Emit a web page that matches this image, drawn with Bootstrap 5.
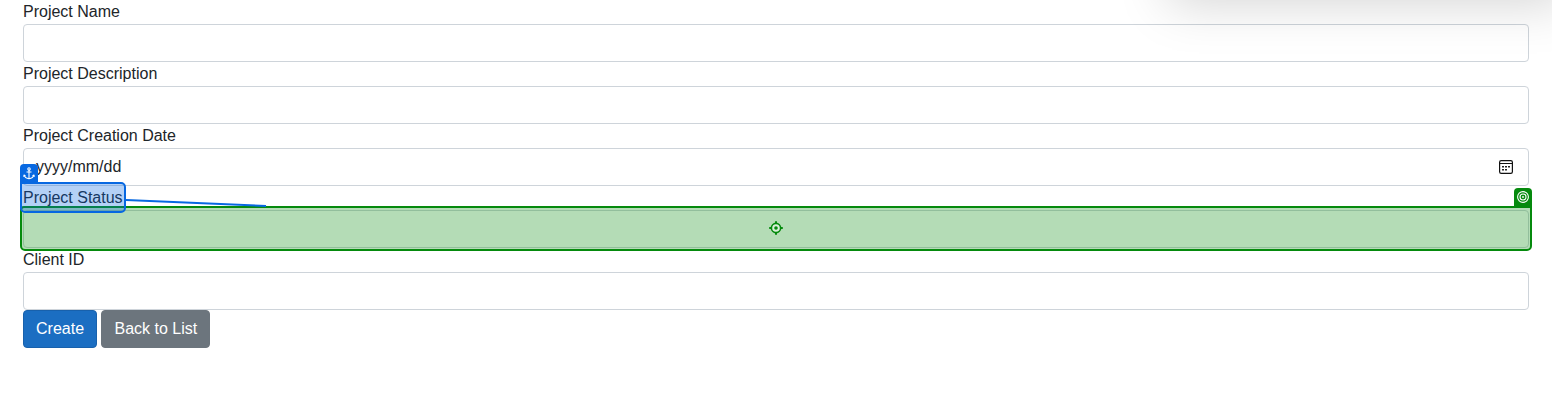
<!DOCTYPE html>
<html lang="en">
<head>
<meta charset="utf-8">
<meta name="viewport" content="width=device-width, initial-scale=1">
<title>Create Project</title>
<link href="https://cdn.jsdelivr.net/npm/bootstrap@5.3.0/dist/css/bootstrap.min.css" rel="stylesheet">
<style>
  body { font-family: "Liberation Sans", Arial, sans-serif; color: #212529; background: #fff; overflow: hidden; height: 413px; }
  .project-form { padding: 0 23px; }
  .project-form label { display: block; width: max-content; line-height: 24px; }
  .project-form .form-control { height: 38px; border-color: #ced4da; border-radius: 4px; color: #212529; }
  .project-form .btn { border-radius: 4px; height: 38px; }
  .btn-create { --bs-btn-color: #fff; --bs-btn-bg: #1b6ec2; --bs-btn-border-color: #1861ac; }
  .btn-back { --bs-btn-color: #fff; --bs-btn-bg: #6c757d; --bs-btn-border-color: #6c757d; }
  .date-icon { width: 14px; height: 14px; margin-right: 3px; }
  /* inspector overlays */
  .target-box { position: absolute; inset: -4px -3px -3px -3px; border: 2px solid #058a0d; border-radius: 4px 0 5px 5px; background: rgba(5,138,13,.3); z-index: 2; }
  .anchor-box { position: absolute; inset: -4px -3px -3px -3px; border: 2px solid #0768e1; border-radius: 0 5px 5px 5px; background: rgba(7,104,225,.3); z-index: 3; }
  .tag { position: absolute; width: 18px; height: 19px; border-radius: 4px 4px 0 0; }
  .tag svg { display: block; margin: 3px auto 0; }
  .anchor-tag { left: -2px; top: -20px; background: #0768e1; }
  .target-tag { right: -2px; top: -20px; background: #058a0d; }
  .crosshair { margin-bottom: 1px; }
  .link-line { position: absolute; left: 102px; top: 10px; z-index: 3; }
  .panel-shadow { position: absolute; left: 1168px; top: -200px; width: 400px; height: 200px; box-shadow: 0 4px 48px 0 rgba(0,0,0,.17); pointer-events: none; }
</style>
</head>
<body class="position-relative">
<form class="project-form">
  <div>
    <label for="name">Project Name</label>
    <input id="name" type="text" class="form-control bg-transparent">
  </div>
  <div>
    <label for="desc">Project Description</label>
    <input id="desc" type="text" class="form-control bg-transparent">
  </div>
  <div>
    <label>Project Creation Date</label>
    <div class="form-control d-flex align-items-center justify-content-between bg-transparent">
      <span>yyyy/mm/dd</span>
      <svg class="date-icon" viewBox="0 0 14 14"><rect x=".6" y=".6" width="12.8" height="12.8" rx="1.6" fill="none" stroke="#111" stroke-width="1.2"/><path d="M1 3.500h12" stroke="#111"/><path d="M6 6h2v1.500H6zM9 6h2v1.500H9zM3 6h2v1.500H3zM3 9h2v1.500H3zM6 9h2v1.500H6z" fill="#222"/></svg>
    </div>
  </div>
  <div>
    <label class="position-relative">Project Status
      <span class="anchor-box"><span class="tag anchor-tag"><svg width="12" height="14" viewBox="0 0 12 14" fill="none" stroke="#fff" stroke-width="1.1"><circle cx="6" cy="1.900" r="1.200"/><path d="M6 3v9M3.500 5h5M1.200 8.200C1.700 10.500 3.300 11.500 6 11.700c2.700-.2 4.300-1.200 4.800-3.500M.5 9.600 1.200 8l1.400 1.100M11.500 9.600 10.800 8 9.400 9.100"/></svg></span></span>
      <svg class="link-line" width="142" height="12" viewBox="0 0 142 12"><path d="M1 4 141 10" stroke="#0768e1" stroke-width="2"/></svg>
    </label>
    <div class="position-relative">
      <input type="text" class="form-control" aria-label="Project Status">
      <div class="target-box d-flex align-items-center justify-content-center">
        <span class="tag target-tag"><svg width="12" height="12" viewBox="0 0 12 12" fill="none" stroke="#fff" stroke-width="1.100"><circle cx="6" cy="6" r="5.400"/><circle cx="6" cy="6" r="3"/><circle cx="6" cy="6" r=".9" fill="#fff" stroke="none"/></svg></span>
        <svg class="crosshair" width="14" height="14" viewBox="0 0 14 14"><circle cx="7" cy="7" r="4.600" fill="#d9efd9" stroke="#058a0d" stroke-width="1.600"/><circle cx="7" cy="7" r="1.800" fill="#058a0d"/><path d="M7 .2v2.500M7 11.300v2.500M.2 7h2.500M11.300 7h2.500" stroke="#058a0d" stroke-width="2"/></svg>
      </div>
    </div>
  </div>
  <div>
    <label for="client">Client ID</label>
    <input id="client" type="text" class="form-control">
  </div>
  <div>
    <button type="button" class="btn btn-create">Create</button>
    <a class="btn btn-back">Back to List</a>
  </div>
</form>
<div class="panel-shadow"></div>
<script src="https://cdn.jsdelivr.net/npm/bootstrap@5.3.0/dist/js/bootstrap.bundle.min.js"></script>
</body>
</html>
